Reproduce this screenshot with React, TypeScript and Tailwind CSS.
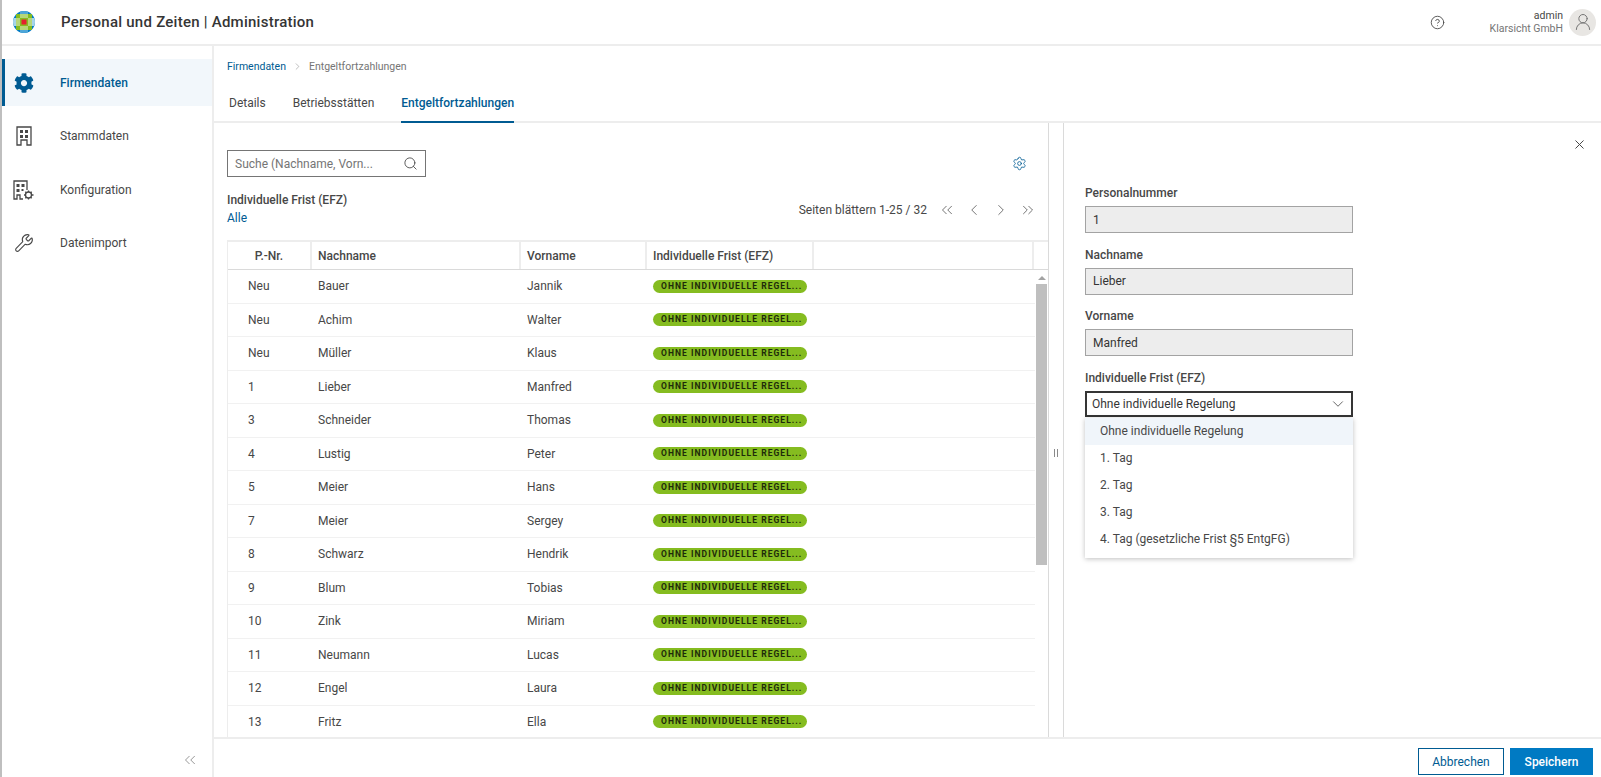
import { ChevronDown, ChevronLeft, ChevronRight, ChevronsLeft, ChevronsRight, CircleHelp, Search, Settings, UserRound, Wrench, X } from "lucide-react";
import { FaCog } from "react-icons/fa";

const rows = [
  ["Neu", "Bauer", "Jannik"],
  ["Neu", "Achim", "Walter"],
  ["Neu", "Müller", "Klaus"],
  ["1", "Lieber", "Manfred"],
  ["3", "Schneider", "Thomas"],
  ["4", "Lustig", "Peter"],
  ["5", "Meier", "Hans"],
  ["7", "Meier", "Sergey"],
  ["8", "Schwarz", "Hendrik"],
  ["9", "Blum", "Tobias"],
  ["10", "Zink", "Miriam"],
  ["11", "Neumann", "Lucas"],
  ["12", "Engel", "Laura"],
  ["13", "Fritz", "Ella"],
];

const options = ["Ohne individuelle Regelung", "1. Tag", "2. Tag", "3. Tag", "4. Tag (gesetzliche Frist §5 EntgFG)"];

function Logo() {
  return (
    <svg width="22" height="22" viewBox="0 0 22 22">
      <defs>
        <clipPath id="globe">
          <circle cx="11" cy="11" r="11" />
        </clipPath>
      </defs>
      <g clipPath="url(#globe)">
        <rect width="22" height="22" fill="#007ac3" />
        <rect x="0" y="7" width="22" height="8" fill="#a5d4ea" />
        <rect x="7" y="0" width="8" height="22" fill="#4fa6d8" />
        <rect x="3" y="3" width="16" height="16" fill="#85bc20" />
        <rect x="7" y="3" width="8" height="16" fill="#b5d67a" />
        <rect x="3" y="7" width="16" height="8" fill="#b5d67a" />
        <rect x="7" y="7" width="8" height="8" fill="#85bc20" />
        <rect x="8.500" y="8.500" width="5" height="5" fill="#e5202e" />
      </g>
    </svg>
  );
}

function BuildingIcon() {
  return (
    <svg width="16" height="20" viewBox="0 0 16 20" fill="none" stroke="#474747" strokeWidth="1.3">
      <path d="M1 1h14v18h-4v-5H5v5H1z" />
      <g fill="#474747" stroke="none">
        <rect x="4" y="4" width="3" height="3" />
        <rect x="9" y="4" width="3" height="3" />
        <rect x="4" y="9" width="3" height="3" />
        <rect x="9" y="9" width="3" height="3" />
      </g>
    </svg>
  );
}

function BuildingGearIcon() {
  return (
    <svg width="22" height="20" viewBox="0 0 22 20" fill="none" stroke="#474747" strokeWidth="1.3">
      <path d="M10 19H7v-4H4v4H1V1h13v9" />
      <g fill="#474747" stroke="none">
        <rect x="3.500" y="4" width="3" height="3" />
        <rect x="8.500" y="4" width="3" height="3" />
        <rect x="3.500" y="9" width="3" height="3" />
        <rect x="8.500" y="9" width="2" height="2" />
      </g>
      <circle cx="15.500" cy="15" r="3" />
      <path d="M15.500 10.500v1.500M15.500 18v1.500M11 15h1.500M19 15h1.500M12.300 11.800l1 1M17.700 17.200l1 1M12.300 18.200l1-1M17.700 12.800l1-1" />
    </svg>
  );
}

function NavItem({ label, icon, active }: { label: string; icon: React.ReactNode; active?: boolean }) {
  return (
    <div className={active ? "flex h-[47px] items-center border-l-[3px] border-[#005b92] bg-[#f2f7fb]" : "flex h-[47px] items-center border-l-[3px] border-transparent"}>
      <div className="flex w-[38px] justify-center">{icon}</div>
      <span className={active ? "ml-[17px] text-[12px] font-medium text-[#005b92]" : "ml-[17px] text-[12px] text-[#474747]"}>{label}</span>
    </div>
  );
}

function ReadOnlyField({ label, value }: { label: string; value: string }) {
  return (
    <div className="mb-[14.500px]">
      <div className="mb-[5px] h-[15px] text-[12px] leading-[15px] font-medium text-[#474747]">{label}</div>
      <div className="flex h-[27px] items-center border border-[#a3a3a3] bg-[#ededed] px-[7px] text-[12px] text-[#353535]">{value}</div>
    </div>
  );
}

export default function App() {
  return (
    <div className="flex h-[777px] w-[1601px] flex-col overflow-hidden border-l-2 border-[#bfbfbf] bg-white font-['Roboto',sans-serif] text-[12px] text-[#474747]">
      {/* top bar */}
      <header className="flex h-[46px] shrink-0 items-center border-b-2 border-[#ededed] pr-[5px]">
        <div className="ml-[11px]">
          <Logo />
        </div>
        <h1 className="ml-[26px] text-[15px] font-medium tracking-[0.25px] text-[#353535]">Personal und Zeiten | Administration</h1>
        <div className="ml-auto flex items-center">
          <CircleHelp size={15} className="text-[#474747]" strokeWidth={1.4} />
          <div className="ml-[45px] text-right text-[10.500px] leading-[13px]">
            <div className="text-[#474747]">admin</div>
            <div className="text-[#757575]">Klarsicht GmbH</div>
          </div>
          <div className="ml-[6px] flex h-[27px] w-[27px] items-center justify-center rounded-full bg-[#e8e6e3]">
            <UserRound size={20} strokeWidth={1.2} className="text-[#757575]" />
          </div>
        </div>
      </header>

      <div className="flex min-h-0 flex-1">
        {/* sidebar */}
        <aside className="relative flex w-[212px] shrink-0 flex-col border-r-2 border-[#ededed] pt-[13px]">
          <div className="flex flex-col gap-[6.500px]">
            <NavItem active label="Firmendaten" icon={<FaCog size={20} className="text-[#005b92]" />} />
            <NavItem label="Stammdaten" icon={<BuildingIcon />} />
            <NavItem label="Konfiguration" icon={<BuildingGearIcon />} />
            <NavItem label="Datenimport" icon={<Wrench size={20} strokeWidth={1.3} className="text-[#474747]" />} />
          </div>
          <ChevronsLeft size={18} strokeWidth={1} className="absolute right-[13px] bottom-[8px] text-[#757575]" />
        </aside>

        <main className="flex min-w-0 flex-1 flex-col">
          {/* breadcrumb and tabs */}
          <div className="h-[77px] shrink-0 border-b-2 border-[#ededed] px-[13px]">
            <div className="flex h-[41px] items-center text-[10.500px]">
              <span className="text-[#005b92]">Firmendaten</span>
              <ChevronRight size={11} strokeWidth={1} className="mx-[6px] text-[#757575]" />
              <span className="text-[#757575]">Entgeltfortzahlungen</span>
            </div>
            <div className="flex h-[36px] gap-[27px] pl-[2px] text-[12px]">
              <div className="pt-[7px]">Details</div>
              <div className="pt-[7px]">Betriebsstätten</div>
              <div className="border-b-2 border-[#005b92] pt-[7px] font-medium text-[#005b92]">Entgeltfortzahlungen</div>
            </div>
          </div>

          <div className="flex min-h-0 flex-1">
            {/* table panel */}
            <section className="flex w-[835px] shrink-0 flex-col border-r border-[#dadada] pl-[13px]">
              <div className="flex h-[54px] shrink-0 items-end justify-between pr-[21px]">
                <div className="flex h-[27px] w-[199px] items-center justify-between border border-[#757575] px-[7px] text-[12px] text-[#757575]">
                  <span>Suche (Nachname, Vorn...</span>
                  <Search size={15} strokeWidth={1.4} className="text-[#474747]" />
                </div>
                <Settings size={15} strokeWidth={1.3} className="mb-[6px] text-[#005b92]" />
              </div>
              <div className="flex h-[63px] shrink-0 items-start justify-between pt-[15px] pr-[11px]">
                <div>
                  <div className="text-[12px] leading-[16px] font-medium">Individuelle Frist (EFZ)</div>
                  <div className="text-[12px] leading-[20px] text-[#005b92]">Alle</div>
                </div>
                <div className="flex items-center pt-[9px]">
                  <span className="mr-[11px] text-[12px]">Seiten blättern 1-25 / 32</span>
                  <div className="flex gap-[9px] text-[#474747]">
                    <ChevronsLeft size={18} strokeWidth={1} />
                    <ChevronLeft size={18} strokeWidth={1} />
                    <ChevronRight size={18} strokeWidth={1} />
                    <ChevronsRight size={18} strokeWidth={1} />
                  </div>
                </div>
              </div>

              <div className="flex min-h-0 flex-1 flex-col overflow-hidden border-t-2 border-l border-[#ededed]">
                <div className="flex h-[28px] shrink-0 border-b border-[#dadada] text-[12px] font-medium">
                  <div className="flex w-[84px] items-center justify-center border-r-2 border-[#ededed]">P.-Nr.</div>
                  <div className="flex w-[209px] items-center border-r-2 border-[#ededed] pl-[6px]">Nachname</div>
                  <div className="flex w-[126px] items-center border-r-2 border-[#ededed] pl-[6px]">Vorname</div>
                  <div className="flex w-[167px] items-center border-r-2 border-[#ededed] pl-[6px]">Individuelle Frist (EFZ)</div>
                  <div className="w-[220px] border-r-2 border-[#ededed]" />
                </div>
                <div className="flex min-h-0 flex-1">
                  <div className="min-w-0 flex-1">
                    {rows.map(([nr, last, first], i) => (
                      <div key={i} className="flex h-[33.500px] items-center border-b border-[#f1f1f1] text-[12px] text-[#474747]">
                        <div className="w-[84px] pl-[20px]">{nr}</div>
                        <div className="w-[209px] pl-[6px]">{last}</div>
                        <div className="w-[126px] pl-[6px]">{first}</div>
                        <div className="pl-[6px]">
                          <div className="flex h-[13px] w-[154px] items-center rounded-full bg-[#85bc20] pl-[8px] text-[8.500px] font-bold tracking-[1.050px] whitespace-nowrap text-[#1e2a0a]">
                            OHNE INDIVIDUELLE REGEL...
                          </div>
                        </div>
                      </div>
                    ))}
                  </div>
                  {/* scrollbar */}
                  <div className="flex w-[13px] shrink-0 flex-col items-center">
                    <div className="mt-[6px] h-0 w-0 border-x-[4px] border-b-[4px] border-x-transparent border-b-[#a3a3a3]" />
                    <div className="mt-[4px] h-[281px] w-[11px] bg-[#bfbfbf]" />
                  </div>
                </div>
              </div>
            </section>

            {/* splitter */}
            <div className="flex w-[15px] shrink-0 items-center justify-center border-r border-[#dadada] pt-[46px]">
              <span className="h-[8px] w-[4px] border-x border-[#8a8a8a]" />
            </div>

            {/* details panel */}
            <section className="relative min-w-0 flex-1 pt-[63px] pl-[21px]">
              <X size={15} strokeWidth={1.6} className="absolute top-[14px] right-[14px] text-[#474747]" />
              <div className="w-[268px]">
                <ReadOnlyField label="Personalnummer" value="1" />
                <ReadOnlyField label="Nachname" value="Lieber" />
                <ReadOnlyField label="Vorname" value="Manfred" />
                <div className="mb-[5px] h-[15px] text-[12px] leading-[15px] font-medium">Individuelle Frist (EFZ)</div>
                <div className="flex h-[26px] items-center justify-between border-2 border-[#353535] pr-[4px] pl-[5px] text-[12px] text-[#353535]">
                  <span>Ohne individuelle Regelung</span>
                  <ChevronDown size={18} strokeWidth={1} />
                </div>
                <div className="mt-[1px] pb-[5px] shadow-[0_1px_5px_rgba(0,0,0,0.25)]">
                  {options.map((o, i) => (
                    <div key={o} className={i === 0 ? "flex h-[27px] items-center bg-[#f0f5fa] pl-[15px] text-[12px]" : "flex h-[27px] items-center pl-[15px] text-[12px]"}>
                      {o}
                    </div>
                  ))}
                </div>
              </div>
            </section>
          </div>

          {/* action bar */}
          <footer className="flex h-[40px] shrink-0 items-start justify-end gap-[6px] border-t-2 border-[#ededed] pt-[9px] pr-[8px]">
            <button className="h-[27px] w-[86px] border border-[#005b92] bg-white text-[12px] text-[#005b92]">Abbrechen</button>
            <button className="h-[27px] w-[83px] bg-[#007ac3] text-[12px] font-medium text-white">Speichern</button>
          </footer>
        </main>
      </div>
    </div>
  );
}
